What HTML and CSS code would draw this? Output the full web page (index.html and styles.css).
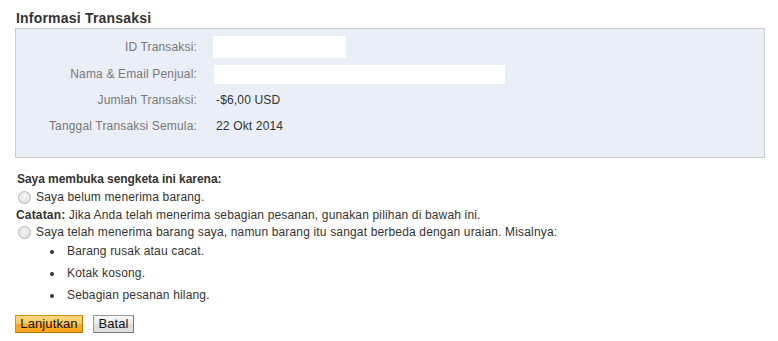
FILE: index.html
```html
<!DOCTYPE html>
<html>
<head>
	<link rel="stylesheet" href="styles.css">
</head>
<body>
	<div class="page">
		<h3 class="title">Informasi Transaksi</h3>
		<div class="info-box">
			<div class="info-grid">
				<label class="info-label">ID Transaksi:</label>
				<div class="info-value"><span class="blank blank-id"></span></div>
				<label class="info-label">Nama &amp; Email Penjual:</label>
				<div class="info-value"><span class="blank blank-name"></span></div>
				<label class="info-label">Jumlah Transaksi:</label>
				<div class="info-value">-$6,00 USD</div>
				<label class="info-label">Tanggal Transaksi Semula:</label>
				<div class="info-value">22 Okt 2014</div>
			</div>
		</div>

		<div class="reason">
			<div class="reason-title">Saya membuka sengketa ini karena:</div>
			<label class="option">
				<input type="radio" name="reason" />
				<span>Saya belum menerima barang.</span>
			</label>
			<div class="note"><b>Catatan:</b> Jika Anda telah menerima sebagian pesanan, gunakan pilihan di bawah ini.</div>
			<label class="option">
				<input type="radio" name="reason" />
				<span>Saya telah menerima barang saya, namun barang itu sangat berbeda dengan uraian. Misalnya:</span>
			</label>
			<ul class="examples">
				<li>Barang rusak atau cacat.</li>
				<li>Kotak kosong.</li>
				<li>Sebagian pesanan hilang.</li>
			</ul>
		</div>

		<div class="actions">
			<button class="btn btn-primary">Lanjutkan</button>
			<button class="btn btn-cancel">Batal</button>
		</div>
	</div>
</body>
</html>
```

FILE: styles.css
```css
html,body{
	margin: 0;
	padding: 0;
	background: #fff;
	font-family: "Liberation Sans", Arial, sans-serif;
	font-size: 12px;
	letter-spacing: 0.16px;
	color: #333;
}
.page{
	width: 750px;
	padding: 11px 0 0 15px;
}
.title{
	margin: 0 0 2px 1px;
	font-size: 14px;
	letter-spacing: 0.2px;
	font-weight: bold;
	color: #333;
	line-height: 15px;
}
.info-box{
	border: 1px solid #ccc;
	background: #eaeff7;
	padding: 7px 0 21px 0;
}
.info-grid{
	display: grid;
	grid-template-columns: 181px 1fr;
	column-gap: 16px;
	row-gap: 7px;
	align-items: center;
}
.info-label{
	text-align: right;
	color: #777;
	line-height: 19px;
}
.info-value{
	color: #333;
	line-height: 19px;
	padding-left: 3px;
}
.blank{
	display: block;
	background: #fff;
}
.blank-id{
	width: 133px;
	height: 22px;
	margin-left: -3px;
}
.blank-name{
	width: 291px;
	height: 19px;
	margin-left: -2px;
}
.reason{
	margin-top: 13px;
}
.reason-title{
	font-weight: bold;
	letter-spacing: -0.05px;
	margin-left: 2px;
	line-height: 17px;
}
.option{
	display: flex;
	align-items: center;
	line-height: 18px;
}
.option input{
	appearance: none;
	width: 13px;
	height: 13px;
	margin: 0 5px 0 3px;
	border: 1px solid #b5b5b5;
	border-radius: 50%;
	background: radial-gradient(circle at 50% 40%, #f4f4f4, #dcdcdc);
}
.note{
	margin-left: 1px;
	line-height: 17px;
	margin-top: 1px;
	margin-bottom: -1px;
	color: #333;
}
.examples{
	margin: -1px 0 0 0;
	padding: 0 0 0 52px;
	list-style: none;
}
.examples li{
	position: relative;
	line-height: 22px;
}
.examples li::before{
	content: "";
	position: absolute;
	left: -17px;
	top: 10px;
	width: 4px;
	height: 4px;
	border-radius: 50%;
	background: #333;
}
.actions{
	display: flex;
	gap: 10px;
	margin-top: 9px;
}
.btn{
	font-family: "Liberation Sans", Arial, sans-serif;
	font-size: 13px;
	letter-spacing: 0.1px;
	color: #111;
	height: 18px;
	padding: 0;
	line-height: 14px;
	border: 1px solid #999;
	border-right-color: #777;
	border-bottom-color: #777;
	background: linear-gradient(#f6f6f6 0%, #eaeaea 50%, #dcdcdc 51%, #e2e2e2 100%);
}
.btn-primary{
	width: 68px;
	border-color: #d9900f;
	border-right-color: #b8760a;
	border-bottom-color: #b8760a;
	background: linear-gradient(#ffd57f 0%, #ffc95a 50%, #ffa920 51%, #ffa51a 100%);
}
.btn-cancel{
	width: 41px;
}
```
